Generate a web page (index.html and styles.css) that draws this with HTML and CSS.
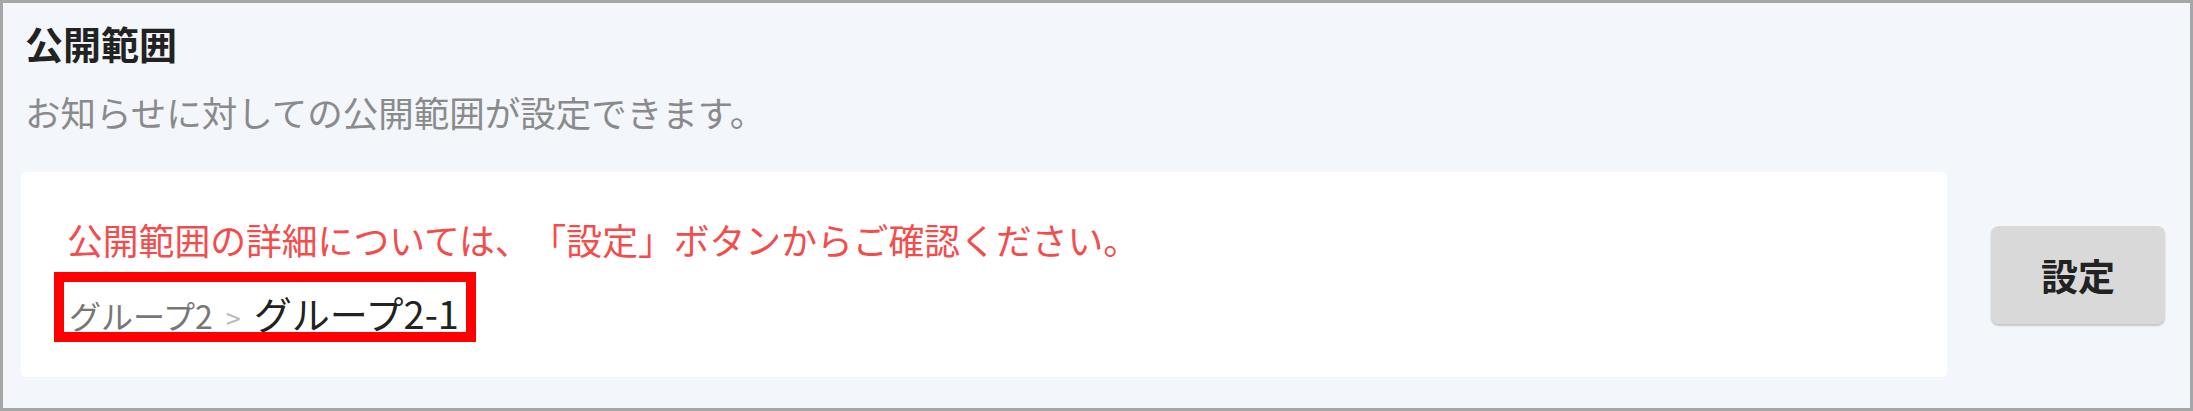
FILE: index.html
```html
<!DOCTYPE html>
<html lang="ja">
<head>
  <meta charset="UTF-8" />
  <meta name="viewport" content="width=device-width, initial-scale=1.0" />
  <title>公開範囲</title>
  <link rel="stylesheet" href="styles.css">
</head>
<body>
  <div class="panel">
    <h2 class="panel-title">公開範囲</h2>
    <p class="panel-desc">お知らせに対しての公開範囲が設定できます。</p>

    <div class="setting-row">
      <div class="scope-card">
        <p class="scope-note">公開範囲の詳細については、「設定」ボタンからご確認ください。</p>
        <div class="breadcrumb">
          <span class="crumb-parent">グループ2</span>
          <span class="crumb-sep">&gt;</span>
          <span class="crumb-current">グループ2-1</span>
        </div>
      </div>
      <button class="btn-setting">設定</button>
    </div>
  </div>
</body>
</html>
```

FILE: styles.css
```css
* {
  box-sizing: border-box;
}

body {
  margin: 0;
  font-family: "Noto Sans CJK JP", "Noto Sans", sans-serif;
  background: #ffffff;
  text-spacing-trim: space-all;
}

.panel {
  width: 2193px;
  height: 411px;
  border: 3px solid #a6a6a6;
  background: #f3f6fb;
  padding: 18px 25px 0 18px;
}

.panel-title {
  margin: 0 0 0 4px;
  font-size: 38px;
  line-height: 44px;
  font-weight: bold;
  color: #222;
}

.panel-desc {
  margin: 25px 0 0 4px;
  font-size: 35.5px;
  line-height: 44px;
  color: #8a8a8a;
}

.setting-row {
  display: flex;
  align-items: center;
  gap: 44px;
  margin-top: 38px;
}

.scope-card {
  flex: 1;
  height: 205px;
  background: #ffffff;
  border-radius: 5px;
  padding: 45px 0 0 46px;
}

.scope-note {
  margin: 0;
  font-size: 35.8px;
  line-height: 44px;
  color: #f44b4b;
}

.breadcrumb {
  display: inline-flex;
  align-items: baseline;
  gap: 13px;
  margin-top: 24px;
  height: 44px;
  padding: 0 4px 0 2px;
  outline: 10px solid #ff0000;
  outline-offset: 3px;
}

.crumb-parent {
  font-size: 32px;
  color: #777;
}

.crumb-sep {
  font-size: 27px;
  color: #bbb;
}

.crumb-current {
  font-size: 38px;
  color: #222;
}

.btn-setting {
  width: 174px;
  height: 98px;
  border: none;
  border-radius: 8px;
  background: #d9d9d9;
  box-shadow: 0 2px 2px rgba(0, 0, 0, 0.2);
  font-family: inherit;
  font-size: 37px;
  font-weight: bold;
  color: #222;
  cursor: pointer;
}
```
